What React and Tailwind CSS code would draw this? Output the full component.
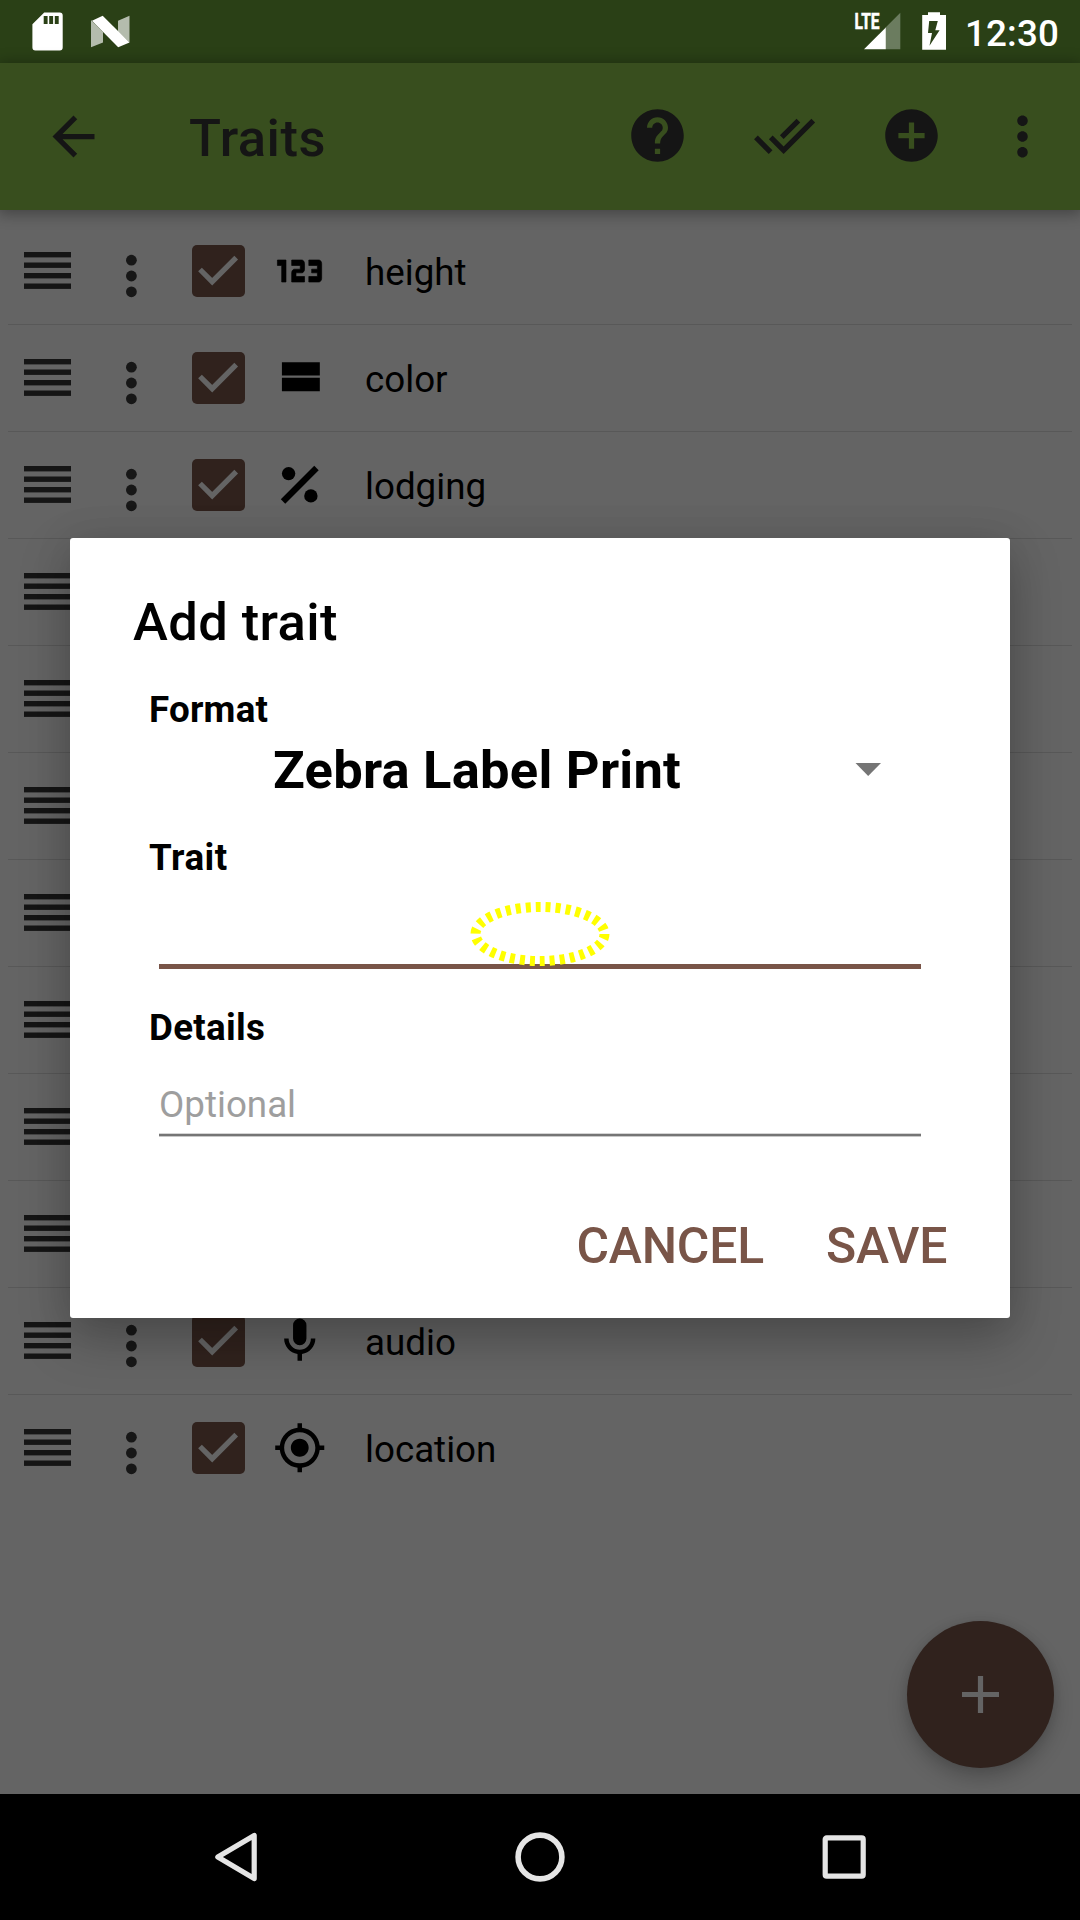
import React from "react";
import {
  MdArrowBack,
  MdHelp,
  MdDoneAll,
  MdAddCircle,
  MdMoreVert,
  MdMyLocation,
  Md123,
} from "react-icons/md";

const PercentIcon = () => (
  <svg viewBox="0 0 24 24" className="h-[53.5px] w-[53.5px]" fill="currentColor">
    <path d="M18.5 3.5l-15 15 2 2 15-15z" />
    <circle cx="7" cy="7" r="3" />
    <circle cx="17" cy="17" r="3" />
  </svg>
);

const StreamIcon = () => (
  <svg viewBox="0 0 24 24" className="h-[53.5px] w-[53.5px]" fill="currentColor">
    <path d="M4 18h17v-6H4v6zM4 5v6h17V5z" />
  </svg>
);

const MicIcon = () => (
  <svg viewBox="0 0 24 24" className="h-[53.5px] w-[53.5px]" fill="currentColor">
    <path d="M12 2a3 3 0 0 1 3 3v6a3 3 0 0 1-6 0V5a3 3 0 0 1 3-3m7 9c0 3.53-2.61 6.44-6 6.93V21h-2v-3.07c-3.39-.49-6-3.4-6-6.93h2a5 5 0 0 0 10 0h2z" />
  </svg>
);

const NumericIcon = () => (
  <Md123
    preserveAspectRatio="none"
    className="h-[88px] w-[68.5px] shrink-0 stroke-current stroke-[0.2] [clip-path:inset(10%)]"
  />
);

const LocationIcon = () => <MdMyLocation className="h-[53.5px] w-[53.5px]" />;

const rows = [
  { label: "height", Icon: NumericIcon },
  { label: "color", Icon: StreamIcon },
  { label: "lodging", Icon: PercentIcon },
  {},
  {},
  {},
  {},
  {},
  {},
  {},
  { label: "audio", Icon: MicIcon },
  { label: "location", Icon: LocationIcon },
];

function DragHandle() {
  return (
    <svg viewBox="0 0 47 37" className="-mt-px mb-px ml-4 h-[37px] w-[47px] text-[#151515]" fill="currentColor">
      <rect y="0" width="47" height="5.4" />
      <rect y="10.5" width="47" height="5.4" />
      <rect y="21" width="47" height="5.4" />
      <rect y="31.5" width="47" height="5.4" />
    </svg>
  );
}

function Checkbox() {
  return (
    <div className="ml-[55px] h-[52.5px] w-[52.5px] rounded-[5px] bg-[#30221d]">
      <svg viewBox="0 0 52.5 52.5" className="h-full w-full" fill="none" stroke="#646464" strokeWidth="5.25">
        <path d="M8 24.5L20.2 36.7L44.2 12.7" />
      </svg>
    </div>
  );
}

function TraitRow({ label, Icon, last }) {
  return (
    <li
      className={
        last
          ? "mx-2 flex h-[107px] items-center border-b border-transparent"
          : "mx-2 flex h-[107px] items-center border-b border-[#585858]"
      }
    >
      <DragHandle />
      {label && (
        <>
          <svg viewBox="0 0 12 44" className="mt-[10px] ml-[54px] h-[44px] w-[12px]" fill="#171717">
            <circle cx="6.4" cy="6.2" r="5.4" />
            <circle cx="6.4" cy="22" r="5.4" />
            <circle cx="6.4" cy="37.8" r="5.4" />
          </svg>
          <Checkbox />
          <div className="ml-[28.5px] flex h-[53.5px] w-[53.5px] items-center justify-center text-black">
            <Icon />
          </div>
          <span className="mt-1 ml-[38.5px] text-[36.75px] leading-none text-black">{label}</span>
        </>
      )}
    </li>
  );
}

function StatusBar() {
  return (
    <div className="flex h-[63px] items-start justify-between bg-[#2a4016]">
      <svg viewBox="0 0 140 63" className="h-[63px] w-[140px]">
        <path
          d="M44.2 12.4H59.7A3 3 0 0 1 62.7 15.4V47.6A3 3 0 0 1 59.7 50.6H35.4A3 3 0 0 1 32.4 47.6V24.2ZM43.7 16V24H47.6V16ZM49.2 16V24H53.1V16ZM54.8 16V24H58.7V16Z"
          fill="#fff"
          fillRule="evenodd"
        />
        <path d="M91 20L103 32V42.5L91 47.2ZM129.5 15.8L118 20.8V31.5L129.5 42.5Z" fill="#fff" fillOpacity=".65" />
        <path d="M92 20.7L102.7 15.8L129.5 42.4L118.2 47.2Z" fill="#fff" />
      </svg>
      <div className="flex h-[63px]">
        <svg viewBox="850 0 100 63" className="h-[63px] w-[100px]">
          <text
            x="854.5"
            y="29.4"
            fill="#fff"
            textLength="25"
            lengthAdjust="spacingAndGlyphs"
            className="stroke-white stroke-[0.6] text-[22.5px] font-bold"
          >
            LTE
          </text>
          <path d="M885.8 27.2L900.3 12.7V49.3H885.8Z" fill="#6b7c5f" />
          <path d="M885.8 27.5V49.3H864Z" fill="#fff" />
          <path
            d="M928 12.2H940V15H946V49.8H922.2V15H928ZM929.2 21L928 33H932L929.5 45.7L939.6 30.2H935.3L937.8 21Z"
            fill="#fff"
            fillRule="evenodd"
          />
        </svg>
        <span className="mt-[13px] mr-[18px] ml-[15px] w-[97px] text-[36.75px] leading-[42px] font-medium tracking-[0.15px] text-white">
          12:30
        </span>
      </div>
    </div>
  );
}

function Toolbar() {
  return (
    <header className="relative z-10 flex h-[147px] items-center bg-[#384e1e] text-[#151515] shadow-[0_2px_14px_2px_rgba(0,0,0,0.33)]">
      <MdArrowBack className="ml-[42.2px] h-[63px] w-[63px]" />
      <h1 className="mt-[3px] ml-[83.8px] w-[437px] text-[52.5px] leading-none font-medium tracking-[0.5px]">Traits</h1>
      <MdHelp className="-mt-[2px] h-[63px] w-[63px]" />
      <MdDoneAll className="-mt-[2px] ml-[64.4px] h-[63px] w-[63px]" />
      <MdAddCircle className="-mt-[2px] ml-[63.6px] h-[63px] w-[63px]" />
      <MdMoreVert className="ml-[48.3px] h-[63px] w-[63px]" />
    </header>
  );
}

function Dialog() {
  return (
    <div className="absolute inset-0 z-20 flex items-start justify-center pt-[538px]">
      <section className="flex h-[780px] w-[940px] flex-col rounded-[3px] bg-white text-black shadow-[0_20px_50px_0_rgba(0,0,0,0.25),0_0_40px_rgba(0,0,0,0.08)]">
        <h2 className="mt-[53px] ml-[63px] h-[62px] text-[52.5px] leading-[62px] font-medium tracking-[0.4px]">
          Add trait
        </h2>
        <h3 className="mt-[35px] ml-[79px] h-[44px] text-[36.75px] leading-[44px] font-bold tracking-[0.2px]">
          Format
        </h3>
        <div className="mt-[7px] flex h-[62px] items-center">
          <span className="ml-[203px] w-[582px] text-[52.5px] leading-[62px] font-bold tracking-[0.23px]">
            Zebra Label Print
          </span>
          <svg viewBox="0 0 26 13" className="mb-[2px] h-[13px] w-[26px]" fill="#757575">
            <path d="M0.5 0H26L13.2 13Z" />
          </svg>
        </div>
        <h3 className="mt-[35px] ml-[79px] h-[44px] text-[36.75px] leading-[44px] font-bold tracking-[0.5px]">
          Trait
        </h3>
        <div className="mx-[89px] mt-[41px] h-[48px] border-b-[5px] border-[#795548]" />
        <h3 className="mt-[37px] ml-[79px] h-[44px] text-[36.75px] leading-[44px] font-bold tracking-[0.3px]">
          Details
        </h3>
        <div className="mx-[89px] mt-[33px] flex h-[54px] flex-col justify-between">
          <span className="text-[36.75px] leading-[44px] text-[#9e9e9e]">Optional</span>
          <svg viewBox="0 0 762 4" preserveAspectRatio="none" className="h-[4px] w-[762px]">
            <rect y=".7" width="762" height="2.7" fill="#757575" />
          </svg>
        </div>
        <div className="mt-[79px] mr-[62.5px] flex h-[60px] items-center justify-end gap-[62px] text-[49.875px] leading-[60px] font-medium text-[#795548]">
          <span className="tracking-[-0.2px]">CANCEL</span>
          <span>SAVE</span>
        </div>
      </section>
      <svg viewBox="0 0 140 64" className="absolute top-[902px] left-[470px] h-[64px] w-[140px]">
        <ellipse cx="70" cy="32" rx="64.5" ry="27" fill="none" stroke="#ffff00" strokeWidth="10" strokeDasharray="5 5" />
      </svg>
    </div>
  );
}

function NavBar() {
  return (
    <nav className="flex h-[126px] items-center bg-black text-[#e5e5e5]">
      <svg
        viewBox="0 0 44 50"
        className="ml-[214px] h-[50px] w-[44px]"
        fill="none"
        stroke="currentColor"
        strokeWidth="5.2"
        strokeLinejoin="round"
      >
        <path d="M40.2 3.4V46.6L3.8 25Z" />
      </svg>
      <svg viewBox="0 0 50 50" className="ml-[257px] h-[50px] w-[50px]" fill="none" stroke="currentColor" strokeWidth="5.6">
        <circle cx="25" cy="25" r="21.9" />
      </svg>
      <svg viewBox="0 0 44 44" className="ml-[257px] h-[44px] w-[44px]" fill="none" stroke="currentColor" strokeWidth="5.2">
        <rect x="3.2" y="2.8" width="38" height="38.4" rx="1.5" />
      </svg>
    </nav>
  );
}

export default function App() {
  return (
    <div className="relative flex h-[1920px] w-[1080px] flex-col overflow-hidden bg-[#646464] font-['Roboto',sans-serif]">
      <StatusBar />
      <Toolbar />
      <main className="relative flex-1 overflow-hidden pt-[8px]">
        <ul>
          {rows.map((row, i) => (
            <TraitRow key={i} {...row} last={i === rows.length - 1} />
          ))}
        </ul>
        <button className="absolute right-[26px] bottom-[26px] flex h-[147px] w-[147px] items-center justify-center rounded-full bg-[#30221d] shadow-[0_10px_20px_rgba(0,0,0,0.22),0_0_10px_rgba(0,0,0,0.08)]">
          <svg viewBox="0 0 37 37" className="h-[37px] w-[37px]" fill="#646464">
            <path d="M0 15.9H15.9V0H21.1V15.9H37V21.1H21.1V37H15.9V21.1H0Z" />
          </svg>
        </button>
      </main>
      <NavBar />
      <Dialog />
    </div>
  );
}
